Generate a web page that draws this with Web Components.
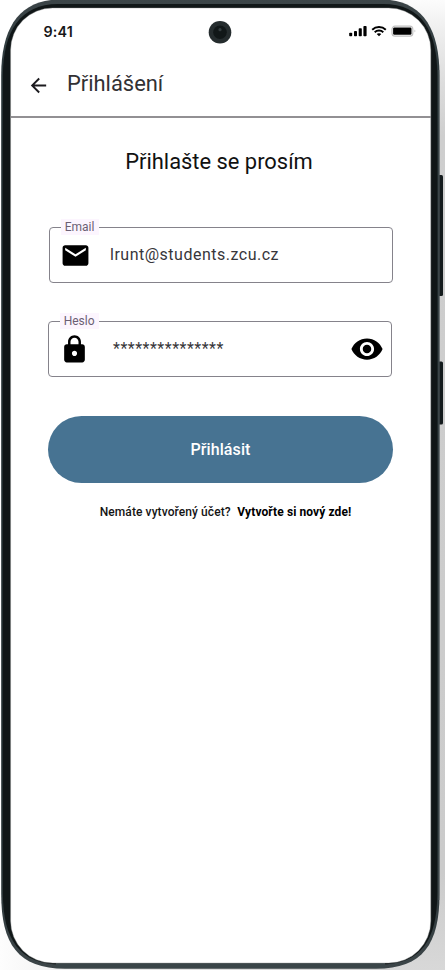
<!DOCTYPE html>
<html lang="cs">
<head>
<meta charset="utf-8">
<title>Přihlášení</title>
<style>
html, body { margin: 0; height: 970px; overflow: hidden; background: #fff; }
body { font-family: Roboto, "Liberation Sans", sans-serif; }
</style>
</head>
<body>
<login-page></login-page>
<script>
const define = (name, html) => customElements.define(name, class extends HTMLElement {
  constructor() {
    super();
    this.attachShadow({ mode: "open" }).innerHTML = html;
  }
});

// Phone body: shadow, side keys, rim, bezel and screen, with the content slotted on top.
define("phone-frame", `
<style>
:host { display: block; position: relative; width: 445px; height: 970px; overflow: hidden; }
svg { position: absolute; inset: 0; }
.screen { position: relative; box-sizing: border-box; margin: 0 14px 0 11px; padding-top: 8px; height: 963px; }
</style>
<svg width="445" height="970" viewBox="0 0 445 970">
  <defs>
    <linearGradient id="side" x1="0" y1="0" x2="0" y2="1">
      <stop offset="0" stop-color="#fcfcfc"/><stop offset=".03" stop-color="#efefef"/>
      <stop offset=".08" stop-color="#dedede"/><stop offset=".14" stop-color="#cecece"/>
      <stop offset=".9" stop-color="#cbcbcb"/><stop offset="1" stop-color="#d8d8d8"/>
    </linearGradient>
    <linearGradient id="foot" x1="0" y1="0" x2="1" y2="0">
      <stop offset="0" stop-color="#fdfdfd"/><stop offset=".15" stop-color="#f2f2f2"/>
      <stop offset=".6" stop-color="#dcdcdc"/><stop offset="1" stop-color="#d0d0d0"/>
    </linearGradient>
    <linearGradient id="rim" x1="0" y1="0" x2="0" y2="1">
      <stop offset="0" stop-color="#3c4548"/><stop offset=".06" stop-color="#303c3f"/>
      <stop offset=".15" stop-color="#253134"/><stop offset=".85" stop-color="#253134"/>
      <stop offset="1" stop-color="#3c4548"/>
    </linearGradient>
  </defs>
  <path d="M390 0H445V970H390Z" fill="url(#side)"/>
  <path d="M0 900H390V970H0Z" fill="url(#foot)"/>
  <rect x="438" y="175" width="5" height="121" rx="1.500" fill="#141b1d"/>
  <rect x="438" y="361.500" width="5" height="63" rx="1.500" fill="#141b1d"/>
  <path d="M1.200 75C1.200 27 20-.5 60-.5H381C421-.5 439.500 27 439.500 75V894C439.500 944 423 968.700 376 968.700H65C18 968.700 1.200 944 1.200 894Z" fill="url(#rim)"/>
  <path d="M439 70V900" stroke="#5d6567" stroke-width=".8"/>
  <path d="M2.900 76C2.900 31 20.500 4 58 4H383C422 4 437.300 31 437.300 76V893C437.300 940 421 964.500 380 964.500H61C20 964.500 2.900 940 2.900 893Z" fill="#101617"/>
  <path d="M56 963H385V968H56Z" fill="#3a4548"/>
  <path d="M10.600 50A42 42 0 0 1 52.600 8H388.800A42 42 0 0 1 430.800 50V921A42 42 0 0 1 388.800 963H52.600A42 42 0 0 1 10.600 921Z" fill="#fff" stroke="#939696" stroke-width=".4"/>
</svg>
<div class="screen"><slot></slot></div>`);

define("status-bar", `
<style>
:host { display: grid; grid-template-columns: 1fr 24px 1fr; align-items: center; height: 48px; color: #171719; }
.time { font: 600 14.300px/16px Inter, sans-serif; padding-left: 32.500px; letter-spacing: .2px; margin-top: -1px; }
.camera { margin-left: -1px; }
.signals { display: flex; justify-content: flex-end; margin: -2px 14px 0 0; }
svg { display: block; }
</style>
<span class="time">9:41</span>
<svg class="camera" width="24" height="24" viewBox="0 0 24 24">
  <circle cx="12" cy="12.300" r="11.300" fill="#252c2e"/><circle cx="12" cy="12.300" r="6.800" fill="#111718"/>
  <circle cx="12" cy="9.700" r="1.600" fill="#343c3f"/>
</svg>
<div class="signals">
<svg width="70" height="16" viewBox="0 0 70 16">
  <g fill="#000">
    <rect x="2.200" y="9.700" width="3" height="3.500" rx=".8"/><rect x="7" y="8" width="3" height="5.200" rx=".8"/>
    <rect x="11.700" y="5.300" width="3.100" height="7.900" rx=".8"/><rect x="16.400" y="3" width="3.200" height="10.200" rx=".8"/>
    <path d="M32 10.200a3.400 3.400 0 0 1 2.300.8L32 13.300 29.700 11a3.400 3.400 0 0 1 2.300-.8Z"/>
    <rect x="46.100" y="4.600" width="18.400" height="7.200" rx="1.200"/>
  </g>
  <g fill="none" stroke="#000" stroke-width="1.900">
    <path d="M25.200 6.700a9.800 9.800 0 0 1 13.600 0M27.700 9.300a6.200 6.200 0 0 1 8.600 0"/>
  </g>
  <rect x="45" y="3.200" width="20.800" height="10" rx="3" fill="none" stroke="#c0c0c0" stroke-width="1.200"/>
  <path d="M67.600 6.600q1.500 1.500 0 3Z" fill="#aaa"/>
</svg>
</div>`);

define("top-bar", `
<style>
:host { display: flex; align-items: center; box-sizing: border-box; height: 62px; padding: 0 0 5px 16px; border-bottom: 2px solid #929093; color: #323134; }
h1 { margin: 0 0 0 17px; font-size: 21.900px; line-height: 30px; font-weight: 400; }
svg { display: block; margin-top: 3px; }
</style>
<svg width="23" height="23" viewBox="0 0 24 24" fill="#1c1b1f"><path d="M20 11H7.830l5.590-5.590L12 4l-8 8 8 8 1.410-1.410L7.830 13H20v-2z"/></svg>
<h1><slot></slot></h1>`);

// Outlined text field; the caption sits over the top border.
define("outlined-field", `
<style>
:host { display: flex; align-items: center; box-sizing: border-box; position: relative; height: 56px; border: 1px solid #85838b; border-radius: 4px; color: #37363a; }
.caption { position: absolute; top: -9px; left: 11px; height: 16px; padding: 0 4.200px 0 3.700px; font-size: 12px; line-height: 16px; color: #6b5f73; background: #fcf5fe; }
.value { flex: 1; font-size: 16px; line-height: 24px; letter-spacing: var(--spacing, .5px); }
slot { display: block; }
::slotted(svg) { display: block; }
</style>
<span class="caption"><slot name="caption"></slot></span>
<slot name="lead"></slot>
<span class="value"><slot></slot></span>
<slot name="trail"></slot>`);

define("pill-button", `
<style>
:host { display: flex; align-items: center; justify-content: center; height: 67px; border-radius: 34px; background: #477392; color: #fff; font-weight: 500; font-size: 16px; letter-spacing: .1px; }
</style><slot></slot>`);

define("signup-hint", `
<style>
:host { display: flex; justify-content: center; gap: 6.500px; font-size: 12px; line-height: 16px; letter-spacing: .09px; color: #141414; font-weight: 500; white-space: nowrap; }
b { font-weight: 700; color: #000; }
</style><span><slot></slot></span><b><slot name="link"></slot></b>`);

define("login-page", `
<style>
:host { display: block; }
main { display: flex; flex-direction: column; padding: 29px 38px 0 37px; }
h2 { margin: 0 0 49px; padding-right: 3px; text-align: center; font-weight: 400; font-size: 21.900px; line-height: 30px; color: #111; }
.email { margin: 1px 0 0 1px; }
.password { margin: 38px 1px 0 0; --spacing: .5px; }
.mail { margin: 0 19px 0 10px; }
.lock { margin: 0 23px 0 10px; }
.eye { margin-right: 7px; }
pill-button { margin-top: 39px; }
signup-hint { margin: 21px 0 0 10px; }
</style>
<phone-frame>
  <status-bar></status-bar>
  <top-bar>Přihlášení</top-bar>
  <main>
    <h2>Přihlašte se prosím</h2>
    <outlined-field class="email">
      <span slot="caption">Email</span>
      <svg slot="lead" class="mail" width="31" height="31" viewBox="0 0 24 24"><path d="M20 4H4c-1.100 0-1.990.9-1.990 2L2 18c0 1.100.9 2 2 2h16c1.100 0 2-.9 2-2V6c0-1.100-.9-2-2-2zm0 4l-8 5-8-5V6l8 5 8-5v2z"/></svg>
      lrunt@students.zcu.cz
    </outlined-field>
    <outlined-field class="password">
      <span slot="caption">Heslo</span>
      <svg slot="lead" class="lock" width="31" height="31" viewBox="0 0 24 24"><path d="M18 8h-1V6c0-2.760-2.240-5-5-5S7 3.240 7 6v2H6c-1.100 0-2 .9-2 2v10c0 1.100.9 2 2 2h12c1.100 0 2-.9 2-2V10c0-1.100-.9-2-2-2zm-6 9c-1.100 0-2-.9-2-2s.9-2 2-2 2 .9 2 2-.9 2-2 2zm3.100-9H8.900V6c0-1.710 1.390-3.100 3.100-3.100s3.100 1.390 3.100 3.100v2z"/></svg>
      ***************
      <svg slot="trail" class="eye" width="34" height="34" viewBox="0 0 24 24"><path d="M12 4.500C7 4.500 2.730 7.610 1 12c1.730 4.390 6 7.500 11 7.500s9.270-3.110 11-7.500c-1.730-4.390-6-7.500-11-7.500zM12 17c-2.760 0-5-2.240-5-5s2.240-5 5-5 5 2.240 5 5-2.240 5-5 5zm0-8c-1.660 0-3 1.340-3 3s1.340 3 3 3 3-1.340 3-3-1.340-3-3-3z"/></svg>
    </outlined-field>
    <pill-button>Přihlásit</pill-button>
    <signup-hint>Nemáte vytvořený účet?<span slot="link">Vytvořte si nový zde!</span></signup-hint>
  </main>
</phone-frame>`);
</script>
</body>
</html>
